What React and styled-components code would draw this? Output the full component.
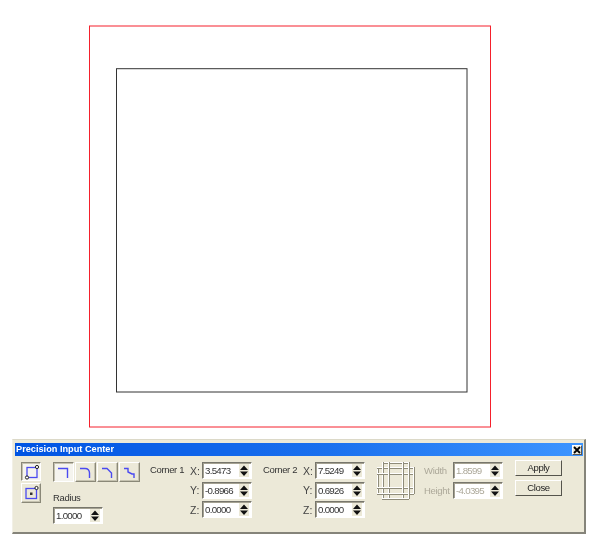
import React from 'react';
import styled, { createGlobalStyle } from 'styled-components';

const Global = createGlobalStyle`
  html, body { margin: 0; padding: 0; background: #fff; }
  body { width: 600px; height: 554px; overflow: hidden; font-family: "Liberation Sans", Arial, sans-serif; }
`;

const Page = styled.div`
  width: 600px;
  height: 554px;
  display: flex;
  flex-direction: column;
  background: #fff;
`;

const Viewport = styled.svg`
  display: block;
  width: 600px;
  height: 439px;
  flex: none;
`;

const Dialog = styled.section`
  flex: none;
  width: 574px;
  height: 95px;
  margin-left: 12px;
  box-sizing: border-box;
  padding: 3px 1px 0 3px;
  background: #ece9d8;
  border-top: 1px solid #dcd9c8;
  border-left: 1px solid #f2f0e6;
  border-right: 2px solid #85847a;
  border-bottom: 2px solid #85847a;
  filter: blur(0.3px);
`;

const TitleBar = styled.header`
  display: flex;
  align-items: center;
  justify-content: space-between;
  height: 13px;
  margin-left: -1px;
  padding: 0 1px;
  background: linear-gradient(90deg, #0054e3 0%, #1a70ee 55%, #3d95ff 100%);
  color: #fff;
  font-size: 9.2px;
  font-weight: 700;
  line-height: 13px;
`;

const CloseBox = styled.span`
  width: 10px;
  height: 10px;
  display: flex;
  align-items: center;
  justify-content: center;
  background: #ece9d8;
  border: 1px solid #fff;
  border-right-color: #555;
  border-bottom-color: #555;
  box-sizing: border-box;
`;

const Body = styled.div`
  display: flex;
  align-items: flex-start;
  padding: 6px 0 0 5px;
  font-size: 9.5px;
  letter-spacing: -0.35px;
  color: #333;
`;

const ModeColumn = styled.div`
  display: flex;
  flex-direction: column;
  gap: 2px;
  width: 20px;
  margin-right: 12px;
`;

const ToolButton = styled.button`
  width: ${p => p.$w || 21}px;
  height: ${p => p.$h || 20}px;
  padding: 0;
  display: flex;
  align-items: center;
  justify-content: center;
  box-sizing: border-box;
  background: ${p => (p.$pressed ? '#f5f4ee' : '#ece9d8')};
  border: 1px solid;
  border-color: ${p => (p.$pressed ? '#8a8878 #fff #fff #8a8878' : '#fff #8a8878 #8a8878 #fff')};
  box-shadow: ${p => (p.$pressed ? 'inset 1px 1px 0 #c5c2b0' : 'inset -1px -1px 0 #c5c2b0')};
`;

const ShapeColumn = styled.div`
  display: flex;
  flex-direction: column;
  width: 88px;
  margin-right: 9px;
`;

const ShapeRow = styled.div`
  display: flex;
  gap: 1px;
`;

const RadiusLabel = styled.label`
  display: block;
  margin-top: 9px;
  height: 16px;
  line-height: 14px;
`;

const CornerGroup = styled.div`
  display: flex;
  align-items: flex-start;
  margin-right: ${p => p.$gap}px;
`;

const CornerTitle = styled.span`
  width: ${p => p.$w}px;
  flex: none;
  padding-top: 1px;
  line-height: 14px;
`;

const Rows = styled.div`
  display: flex;
  flex-direction: column;
  gap: 2.5px;
`;

const Row = styled.div`
  display: flex;
  align-items: center;
`;

const AxisLabel = styled.span`
  width: ${p => p.$w || 12}px;
  flex: none;
  font-size: 10.5px;
  letter-spacing: 0;
  color: ${p => (p.$off ? '#aca899' : '#444')};
`;

const Spin = styled.div`
  width: 50px;
  height: 17px;
  box-sizing: border-box;
  display: flex;
  align-items: center;
  justify-content: space-between;
  padding: 0 2px 0 2px;
  background: #fff;
  border: 1px solid;
  border-color: #77766c #fff #fff #77766c;
  box-shadow: inset 1px 1px 0 #a5a292;
  color: ${p => (p.$off ? '#aca899' : '#333')};
  font-size: 9.7px;
  letter-spacing: -0.7px;
  line-height: 15px;
`;

const SpinArrows = styled.svg`
  display: block;
  flex: none;
  width: 10px;
  height: 13px;
`;

const GridIcon = styled.svg`
  display: block;
  flex: none;
  width: 40px;
  height: 40px;
  margin: -1px 8px 0 0;
`;

const SizeLabel = styled(AxisLabel)`
  font-size: 9.5px;
  letter-spacing: -0.3px;
`;

const ActionColumn = styled.div`
  display: flex;
  flex-direction: column;
  gap: 4px;
  margin: -2px 0 0 12px;
`;

const ActionButton = styled.button`
  width: 47px;
  height: 16px;
  padding: 0;
  box-sizing: border-box;
  background: #ece9d8;
  border: 1px solid;
  border-color: #fff #55544c #55544c #fff;
  color: #222;
  font-family: inherit;
  font-size: 9.5px;
  letter-spacing: -0.4px;
  line-height: 14px;
`;

const BLUE = '#4a4af0';
const GRID_STOPS = [1, 6, 12, 26, 32, 37];

function SpinBox({ value, off }) {
  return (
    <Spin $off={off}>
      <span>{value}</span>
      <SpinArrows viewBox="0 0 10 13">
        <rect width="10" height="13" fill="#ece9d8" />
        <path d="M5 1.5 L9 6 H1 Z M1 7.5 H9 L5 12 Z" fill="#111" />
      </SpinArrows>
    </Spin>
  );
}

function CornerFields({ values }) {
  const axes = ['X:', 'Y:', 'Z:'];
  return (
    <Rows>
      {axes.map((a, i) => (
        <Row key={a}>
          <AxisLabel>{a}</AxisLabel>
          <SpinBox value={values[i]} />
        </Row>
      ))}
    </Rows>
  );
}

function ShapeIcon({ d }) {
  return (
    <svg width="15" height="15" viewBox="0 0 15 15" fill="none">
      <path d={d} stroke={BLUE} strokeWidth="1.4" />
    </svg>
  );
}

function GridGlyph() {
  return (
    <GridIcon viewBox="0 0 40 40" fill="none">
      {GRID_STOPS.map((p, i) => {
        const outer = i === 0 || i === 5;
        const a = outer ? 6 : 1;
        const b = outer ? 33 : 38;
        return (
          <g key={p}>
            <path d={`M${a} ${p + 0.5} H${b}`} stroke="#fff" />
            <path d={`M${a} ${p + 1.5} H${b}`} stroke="#8f8c7a" />
            <path d={`M${p + 0.5} ${a} V${b}`} stroke="#fff" />
            <path d={`M${p + 1.5} ${a} V${b}`} stroke="#8f8c7a" />
          </g>
        );
      })}
    </GridIcon>
  );
}

export default function App() {
  return (
    <Page>
      <Global />
      <Viewport viewBox="0 0 600 439">
        <rect x="89.5" y="26" width="401" height="401" fill="none" stroke="#f5202c" strokeWidth="1" />
        <rect x="116.5" y="68.7" width="350.5" height="323.3" fill="none" stroke="#333" strokeWidth="1" />
      </Viewport>
      <Dialog>
        <TitleBar>
          <span>Precision Input Center</span>
          <CloseBox>
            <svg width="8" height="8" viewBox="0 0 8 8">
              <path d="M1 1 L7 7 M7 1 L1 7" stroke="#000" strokeWidth="1.8" />
            </svg>
          </CloseBox>
        </TitleBar>
        <Body>
          <ModeColumn>
            <ToolButton $w={20} $h={19} $pressed>
              <svg width="16" height="16" viewBox="0 0 16 16" fill="none">
                <rect x="4" y="3.5" width="10" height="10" stroke={BLUE} strokeWidth="1.3" />
                <circle cx="14" cy="3" r="1.6" fill="#fff" stroke="#222" />
                <circle cx="4" cy="13.5" r="1.6" fill="#fff" stroke="#222" />
              </svg>
            </ToolButton>
            <ToolButton $w={20} $h={20}>
              <svg width="16" height="16" viewBox="0 0 16 16" fill="none">
                <rect x="3" y="3.5" width="10.5" height="10" stroke={BLUE} strokeWidth="1.3" />
                <rect x="7" y="7.5" width="2.5" height="2.5" fill="#333" />
                <circle cx="13.5" cy="3" r="1.6" fill="#fff" stroke="#222" />
              </svg>
            </ToolButton>
          </ModeColumn>
          <ShapeColumn>
            <ShapeRow>
              <ToolButton $pressed><ShapeIcon d="M2 3.5 H11.5 V13" /></ToolButton>
              <ToolButton><ShapeIcon d="M2 3.5 H7 Q11.5 3.5 11.5 8 V13" /></ToolButton>
              <ToolButton><ShapeIcon d="M2 3.5 H7 L11.5 8 V13" /></ToolButton>
              <ToolButton><ShapeIcon d="M2 3.5 H6 V7 L10 9 H12 V13" /></ToolButton>
            </ShapeRow>
            <RadiusLabel>Radius</RadiusLabel>
            <SpinBox value="1.0000" />
          </ShapeColumn>
          <CornerGroup $gap={11}>
            <CornerTitle $w={40}>Corner 1</CornerTitle>
            <CornerFields values={['3.5473', '-0.8966', '0.0000']} />
          </CornerGroup>
          <CornerGroup $gap={11}>
            <CornerTitle $w={40}>Corner 2</CornerTitle>
            <CornerFields values={['7.5249', '0.6926', '0.0000']} />
          </CornerGroup>
          <GridGlyph />
          <Rows>
            <Row>
              <SizeLabel $off $w={29}>Width</SizeLabel>
              <SpinBox off value="1.8599" />
            </Row>
            <Row>
              <SizeLabel $off $w={29}>Height</SizeLabel>
              <SpinBox off value="-4.0395" />
            </Row>
          </Rows>
          <ActionColumn>
            <ActionButton>Apply</ActionButton>
            <ActionButton>Close</ActionButton>
          </ActionColumn>
        </Body>
      </Dialog>
    </Page>
  );
}
